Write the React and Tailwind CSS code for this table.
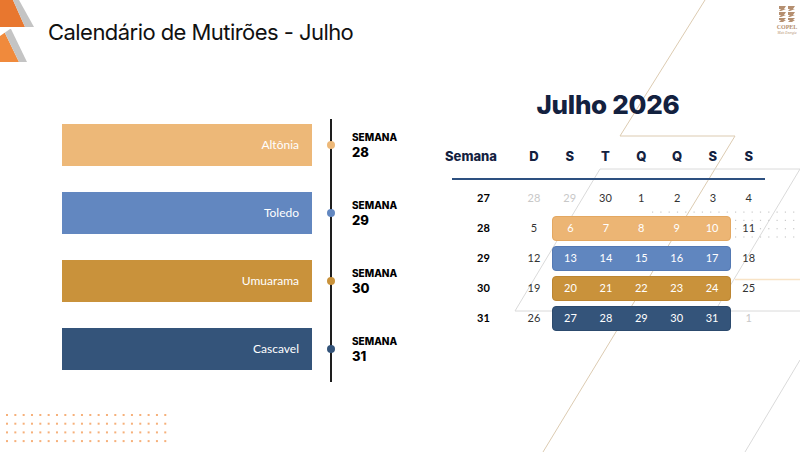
import React from 'react';

const cities = [
  { name: 'Altônia', week: 28, bar: 'bg-[#EDB878]', dot: 'bg-[#EDB878]' },
  { name: 'Toledo', week: 29, bar: 'bg-[#6287C0]', dot: 'bg-[#6287C0]' },
  { name: 'Umuarama', week: 30, bar: 'bg-[#C9923B]', dot: 'bg-[#C9923B]' },
  { name: 'Cascavel', week: 31, bar: 'bg-[#34547A]', dot: 'bg-[#34547A]' },
];

const weeks = [
  { n: 27, first: 28, mid: [29, 30, 1, 2, 3], last: 4, mutedFirst: true, mutedMid: [29] },
  { n: 28, first: 5, mid: [6, 7, 8, 9, 10], last: 11, box: 'bg-[#ECB574] border-[#e3a862]' },
  { n: 29, first: 12, mid: [13, 14, 15, 16, 17], last: 18, box: 'bg-[#6086BF] border-[#5479b3]' },
  { n: 30, first: 19, mid: [20, 21, 22, 23, 24], last: 25, box: 'bg-[#C9923B] border-[#bb8532]' },
  { n: 31, first: 26, mid: [27, 28, 29, 30, 31], last: 1, box: 'bg-[#34547A] border-[#2c4a6d]', mutedLast: true },
];

const days = ['D', 'S', 'T', 'Q', 'Q', 'S', 'S'];

function Decor() {
  const greyDots = [];
  for (let r = 0; r < 4; r++) {
    for (let c = 0; c < 18; c++) {
      greyDots.push(<rect key={`g${r}-${c}`} x={652 + c * 8.3} y={211.5 + r * 8.3} width="1.2" height="1.2" fill="#c9c9c9" />);
    }
  }
  const orangeDots = [];
  for (let r = 0; r < 4; r++) {
    for (let c = 0; c < 20; c++) {
      orangeDots.push(<rect key={`o${r}-${c}`} x={6 + c * 8.33} y={414 + r * 8.7} width="2" height="2" fill="#f6b07a" />);
    }
  }
  return (
    <svg className="absolute inset-0 pointer-events-none" width="800" height="452" viewBox="0 0 800 452">
      {/* corner shapes */}
      <polygon points="0,0 13,0 25,27 0,27" fill="#e8772f" />
      <polygon points="13,0 19,0 34,27 25,27" fill="#c4c4c4" />
      <polygon points="0,29 3,29 19,62 0,62" fill="#f08a3c" />
      <polygon points="3,29 11,29 27,62 19,62" fill="#c4c4c4" />
      <polygon points="0,29 10,29 0,36" fill="#ffffff" />

      {/* thin lines */}
      <polyline points="705,0 620,136 735,136 543,452" fill="none" stroke="#dccbb1" strokeWidth="1" />
      <polyline points="800,169 600,169 515,311 800,311" fill="none" stroke="#dadada" strokeWidth="1" />
      <line x1="800" y1="169" x2="715" y2="311" stroke="#dadada" strokeWidth="1" />
      <line x1="800" y1="360" x2="745" y2="452" stroke="#dadada" strokeWidth="1" />
      <line x1="735" y1="279.5" x2="800" y2="279.5" stroke="#f8e3c6" strokeWidth="1.5" />
      {greyDots}
      {orangeDots}
    </svg>
  );
}

function Logo() {
  return (
    <div className="absolute right-[3px] top-[5px] flex w-[20px] flex-col items-center">
      <svg width="18" height="18" viewBox="0 0 18 18">
        <g fill="#b58f70">
          <polygon points="1,1 8,1 6,4 8,4 3,6 1,6 3,4 1,4" />
          <polygon points="10,1 17,1 15,4 17,4 12,6 10,6 12,4 10,4" />
          <polygon points="1,7 8,7 6,10 8,10 3,12 1,12 3,10 1,10" />
          <polygon points="10,7 17,7 15,10 17,10 12,12 10,12 12,10 10,10" />
          <polygon points="1,13 8,13 6,15 8,15 5,17 1,17 3,15 1,15" />
          <polygon points="10,13 17,13 15,15 17,15 14,17 10,17 12,15 10,15" />
        </g>
      </svg>
      <span className="mt-[1px] font-['Liberation_Serif',serif] text-[6px] font-bold leading-[7px] text-[#b58f70]">COPEL</span>
      <span className="font-['Liberation_Serif',serif] text-[3.5px] italic leading-[5px] text-[#b58f70]">Mais Energia</span>
    </div>
  );
}

function Timeline() {
  return (
    <div className="ml-[62px] mt-[55px] flex w-[383px] flex-col">
      {cities.map((c, i) => (
        <div key={c.name} className={`flex items-start ${i === 3 ? 'h-[59px]' : 'h-[68px]'}`}>
          <div className={`mt-[5px] flex h-[42px] w-[250px] items-center justify-end pr-[13px] ${c.bar}`}>
            <span className="font-['Lato',sans-serif] text-[12px] text-white">{c.name}</span>
          </div>
          <div className="relative flex h-full w-[38px] justify-center">
            <div className="h-full w-[2px] bg-[#1e1e1e]" />
            <div className={`absolute left-[15px] top-[22px] h-[8px] w-[8px] rounded-full ${c.dot}`} />
          </div>
          <div className="flex flex-col pl-[2px] pt-[12px] font-['Inter',sans-serif] text-black">
            <span className="text-[10px] font-extrabold leading-[13px]">SEMANA</span>
            <span className="text-[13px] font-extrabold leading-[16px]">{c.week}</span>
          </div>
        </div>
      ))}
    </div>
  );
}

function Num({ value, muted, light }) {
  return (
    <div
      className={`flex items-center justify-center font-['Lato',sans-serif] text-[11px] ${
        light ? 'text-white' : muted ? 'text-[#c8c8c8]' : 'text-[#333]'
      }`}
    >
      {value}
    </div>
  );
}

function Calendar() {
  return (
    <div className="mt-[24px] flex w-[322px] flex-col">
      <h2 className="h-[34px] pl-[4px] text-center font-['Inter',sans-serif] text-[26px] font-extrabold leading-[34px] tracking-[-0.3px] text-[#13213f]">
        Julho 2026
      </h2>
      <div className="mt-[23px] grid h-[24px] grid-cols-[71px_repeat(7,35.8px)] items-center font-['Inter',sans-serif] text-[13px] font-extrabold text-[#13213f]">
        <div>Semana</div>
        {days.map((d, i) => (
          <div key={i} className="text-center">{d}</div>
        ))}
      </div>
      <div className="ml-[7px] mt-[9px] h-[2px] w-[313px] bg-[#2d5080]" />
      <div className="mt-[3px] flex flex-col">
        {weeks.map((w) => (
          <div key={w.n} className="grid h-[30px] grid-cols-[71px_repeat(7,35.8px)]">
            <div className="flex items-center justify-center pl-[6px] font-['Lato',sans-serif] text-[11px] font-bold text-black">
              {w.n}
            </div>
            <Num value={w.first} muted={w.mutedFirst} />
            {w.box ? (
              <div className={`col-span-5 my-[2.5px] grid grid-cols-5 rounded-[4px] border ${w.box}`}>
                {w.mid.map((d) => (
                  <Num key={d} value={d} light />
                ))}
              </div>
            ) : (
              w.mid.map((d) => <Num key={d} value={d} muted={w.mutedMid && w.mutedMid.includes(d)} />)
            )}
            <Num value={w.last} muted={w.mutedLast} />
          </div>
        ))}
      </div>
    </div>
  );
}

export default function App() {
  return (
    <div className="relative h-[452px] w-[800px] overflow-hidden bg-white">
      <Decor />
      <Logo />
      <div className="relative flex flex-col">
        <header className="flex h-[64px] items-center pl-[48px]">
          <h1 className="font-['Inter',sans-serif] text-[22px] font-normal tracking-[-0.55px] text-[#111]">
            Calendário de Mutirões - Julho
          </h1>
        </header>
        <main className="flex items-start">
          <Timeline />
          <Calendar />
        </main>
      </div>
    </div>
  );
}
